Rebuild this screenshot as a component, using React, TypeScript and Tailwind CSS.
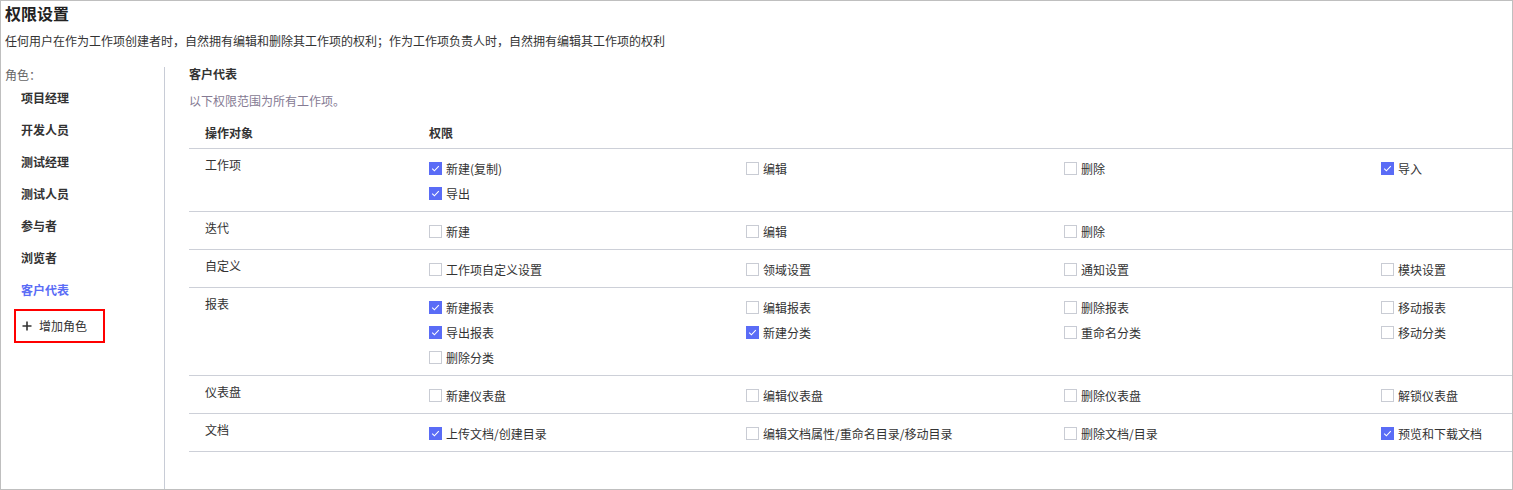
import React from 'react';

type Perm = { label: string; checked: boolean };
type Row = { target: string; perms: Perm[] };

const roles = ['项目经理', '开发人员', '测试经理', '测试人员', '参与者', '浏览者', '客户代表'];
const activeRole = '客户代表';

const rows: Row[] = [
  {
    target: '工作项',
    perms: [
      { label: '新建(复制)', checked: true },
      { label: '编辑', checked: false },
      { label: '删除', checked: false },
      { label: '导入', checked: true },
      { label: '导出', checked: true },
    ],
  },
  {
    target: '迭代',
    perms: [
      { label: '新建', checked: false },
      { label: '编辑', checked: false },
      { label: '删除', checked: false },
    ],
  },
  {
    target: '自定义',
    perms: [
      { label: '工作项自定义设置', checked: false },
      { label: '领域设置', checked: false },
      { label: '通知设置', checked: false },
      { label: '模块设置', checked: false },
    ],
  },
  {
    target: '报表',
    perms: [
      { label: '新建报表', checked: true },
      { label: '编辑报表', checked: false },
      { label: '删除报表', checked: false },
      { label: '移动报表', checked: false },
      { label: '导出报表', checked: true },
      { label: '新建分类', checked: true },
      { label: '重命名分类', checked: false },
      { label: '移动分类', checked: false },
      { label: '删除分类', checked: false },
    ],
  },
  {
    target: '仪表盘',
    perms: [
      { label: '新建仪表盘', checked: false },
      { label: '编辑仪表盘', checked: false },
      { label: '删除仪表盘', checked: false },
      { label: '解锁仪表盘', checked: false },
    ],
  },
  {
    target: '文档',
    perms: [
      { label: '上传文档/创建目录', checked: true },
      { label: '编辑文档属性/重命名目录/移动目录', checked: false },
      { label: '删除文档/目录', checked: false },
      { label: '预览和下载文档', checked: true },
    ],
  },
];

function Checkbox({ checked }: { checked: boolean }) {
  if (checked) {
    return (
      <span className="w-[13px] h-[13px] shrink-0 bg-[#5a6cf6] flex items-center justify-center">
        <svg width="13" height="13" viewBox="0 0 13 13" fill="none">
          <path d="M3.2 6.6 L5.4 8.8 L9.8 4.2" stroke="#fff" strokeWidth="1.1" />
        </svg>
      </span>
    );
  }
  return <span className="w-[13px] h-[13px] shrink-0 border border-[#c9ccd4] bg-white" />;
}

export default function App() {
  return (
    <div
      className="w-[1513px] h-[490px] border border-[#bfbfbf] bg-white flex flex-col text-[12px] text-[#333]"
      style={{ fontFamily: '"Noto Sans CJK SC", "Noto Sans", sans-serif' }}
    >
      <h1 className="px-[4px] text-[16px] leading-[24px] font-bold text-[#222]">权限设置</h1>
      <p className="px-[4px] mt-[6px] leading-[20px]">
        任何用户在作为工作项创建者时，自然拥有编辑和删除其工作项的权利；作为工作项负责人时，自然拥有编辑其工作项的权利
      </p>

      <div className="flex flex-1 mt-[16px]">
        {/* role list */}
        <div className="w-[164px] border-r border-[#c8ccd6] shrink-0">
          <div className="px-[4px] leading-[15px] text-[#666]">角色：</div>
          <ul>
            {roles.map((r) => (
              <li
                key={r}
                className={`h-[32px] pl-[20px] flex items-center font-bold ${
                  r === activeRole ? 'text-[#5a6cf6]' : 'text-[#333]'
                }`}
              >
                {r}
              </li>
            ))}
          </ul>
          <button className="ml-[13px] mt-[3px] w-[91px] h-[34px] border-2 border-[#ff0000] flex items-center pl-[6px] text-[#333]">
            <svg width="10" height="10" viewBox="0 0 10 10" fill="none" className="mr-[7px]">
              <path d="M5 0.5 V9.5 M0.5 5 H9.5" stroke="#333" strokeWidth="1.6" />
            </svg>
            增加角色
          </button>
        </div>

        {/* permissions */}
        <div className="flex-1 pl-[24px]">
          <div className="font-bold leading-[14px]">{activeRole}</div>
          <div className="mt-[10px] leading-[20px] text-[#857a93]">以下权限范围为所有工作项。</div>

          <div className="mt-[6px]">
            <div className="flex h-[32px] items-center border-b border-[#cdd0d8] font-bold">
              <div className="w-[240px] pl-[16px]">操作对象</div>
              <div>权限</div>
            </div>
            {rows.map((row) => (
              <div key={row.target} className="flex border-b border-[#cdd0d8] pt-[7px] pb-[5px]">
                <div className="w-[240px] shrink-0 pl-[16px] leading-[18px]">{row.target}</div>
                <div className="flex-1 grid grid-cols-[317px_318px_317px_1fr] auto-rows-[25px]">
                  {row.perms.map((p) => (
                    <label key={p.label} className="flex items-center gap-[4px] leading-[20px]">
                      <Checkbox checked={p.checked} />
                      <span>{p.label}</span>
                    </label>
                  ))}
                </div>
              </div>
            ))}
          </div>
        </div>
      </div>
    </div>
  );
}
